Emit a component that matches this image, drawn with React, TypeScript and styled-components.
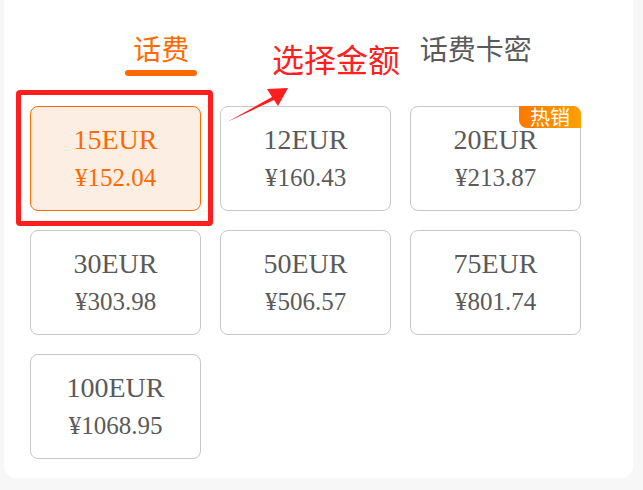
import React from "react";
import styled, { createGlobalStyle } from "styled-components";

const Global = createGlobalStyle`
  html, body { margin: 0; padding: 0; background: #f7f7f7; }
  body { font-family: "Noto Sans CJK SC", "Noto Sans", sans-serif; }
`;

const Page = styled.div`
  width: 643px;
  height: 490px;
  position: relative;
  overflow: hidden;
`;

const Panel = styled.div`
  margin-left: 4px;
  width: 629px;
  height: 478px;
  background: #fff;
  border-radius: 0 0 12px 12px;
  display: flex;
  flex-direction: column;
`;

const Tabs = styled.div`
  display: flex;
  height: 106px;
`;

const Tab = styled.div<{ $active?: boolean }>`
  flex: 1;
  display: flex;
  flex-direction: column;
  align-items: center;
  padding-top: 28px;
  font-size: 28px;
  line-height: 40px;
  color: ${(p) => (p.$active ? "#ff6a00" : "#5a5a5a")};
`;

const Underline = styled.div`
  width: 72px;
  height: 6px;
  border-radius: 3px;
  background: #ff6a00;
  margin-top: 2px;
`;

const Grid = styled.div`
  display: grid;
  grid-template-columns: repeat(3, 171px);
  grid-auto-rows: 105px;
  column-gap: 19px;
  row-gap: 19px;
  padding-left: 26px;
`;

const Card = styled.div<{ $selected?: boolean }>`
  position: relative;
  box-sizing: border-box;
  border: 1px solid ${(p) => (p.$selected ? "#ff6a00" : "#c8c8c8")};
  background: ${(p) => (p.$selected ? "#fdeee4" : "#fff")};
  border-radius: 8px;
  display: flex;
  flex-direction: column;
  align-items: center;
  justify-content: center;
  font-family: "Liberation Serif", "Times New Roman", serif;
  color: ${(p) => (p.$selected ? "#ff6a00" : "#5a5a5a")};
`;

const Amount = styled.div`
  font-size: 28px;
  line-height: 38px;
`;

const Price = styled.div`
  font-size: 25px;
  line-height: 38px;
`;

const Badge = styled.div`
  position: absolute;
  top: -1px;
  right: -1px;
  width: 62px;
  height: 22px;
  border-radius: 0 8px 0 8px;
  background: linear-gradient(90deg, #ff7800, #ffa000);
  color: #fff;
  font-family: "Noto Sans CJK SC", sans-serif;
  font-size: 20px;
  line-height: 22px;
  text-align: center;
`;

const RedBox = styled.div`
  position: absolute;
  left: 16px;
  top: 90px;
  width: 197px;
  height: 136px;
  box-sizing: border-box;
  border: 5px solid #ff1e1e;
  border-radius: 4px;
  pointer-events: none;
`;

const Note = styled.div`
  position: absolute;
  left: 272px;
  top: 36px;
  font-size: 32px;
  line-height: 44px;
  color: #ff2020;
  font-family: "Noto Sans CJK SC", sans-serif;
`;

const Arrow = styled.svg`
  position: absolute;
  left: 220px;
  top: 80px;
`;

const items = [
  { a: "15EUR", p: "¥152.04", sel: true },
  { a: "12EUR", p: "¥160.43" },
  { a: "20EUR", p: "¥213.87", hot: true },
  { a: "30EUR", p: "¥303.98" },
  { a: "50EUR", p: "¥506.57" },
  { a: "75EUR", p: "¥801.74" },
  { a: "100EUR", p: "¥1068.95" },
];

export default function App() {
  return (
    <Page>
      <Global />
      <Panel>
        <Tabs>
          <Tab $active>
            话费
            <Underline />
          </Tab>
          <Tab>话费卡密</Tab>
        </Tabs>
        <Grid>
          {items.map((it) => (
            <Card key={it.a} $selected={it.sel}>
              <Amount>{it.a}</Amount>
              <Price>{it.p}</Price>
              {it.hot && <Badge>热销</Badge>}
            </Card>
          ))}
        </Grid>
      </Panel>
      <RedBox />
      <Note>选择金额</Note>
      <Arrow width="80" height="50" viewBox="0 0 80 50">
        <polygon points="7,42 52,17 47,9 68,8 58,26 54,20" fill="#ff1e1e" />
      </Arrow>
    </Page>
  );
}
